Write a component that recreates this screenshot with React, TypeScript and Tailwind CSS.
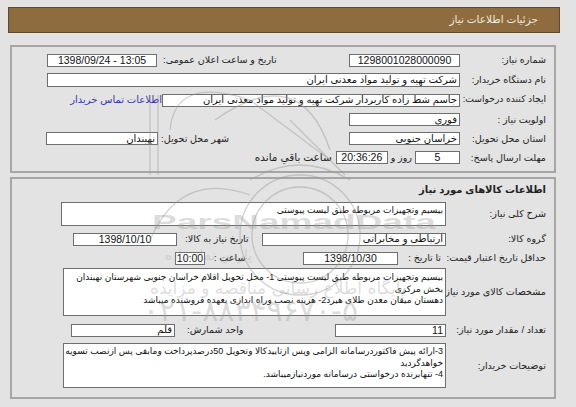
import React from "react";

function Field({
  className = "",
  children,
  center = false,
  ltr = false,
  num = false,
}: {
  className?: string;
  children?: React.ReactNode;
  center?: boolean;
  ltr?: boolean;
  num?: boolean;
}) {
  return (
    <div
      dir={ltr ? "ltr" : undefined}
      className={`h-[13px] shrink-0 bg-white border border-[#6e6e6e] flex items-center px-[2px] leading-none overflow-hidden whitespace-nowrap text-[#111] ${
        num ? "text-[10.5px]" : "text-[10px]"
      } ${center ? "justify-center" : ltr ? "justify-end" : "justify-start"} ${className}`}
    >
      {children}
    </div>
  );
}

function Label({ className = "", children }: { className?: string; children: React.ReactNode }) {
  return <div className={`shrink-0 whitespace-nowrap leading-none ${className}`}>{children}</div>;
}

const areaCls =
  "bg-white border border-[#6e6e6e] px-[2px] text-[9px] leading-[11.5px] whitespace-nowrap overflow-hidden text-[#111]";

export default function App() {
  return (
    <div
      dir="rtl"
      className="relative w-[576px] h-[407px] overflow-hidden bg-[#e3e3e3] text-[#222] text-[9.6px] font-['Liberation_Sans','DejaVu_Sans',sans-serif]"
    >
      <div className="pt-[7px] pl-[8px] pr-[16px]">
        <div className="h-[26px] bg-[#8e6c3f] border border-[#5d4a32] flex items-center pr-[21px] text-[10.5px] text-[#f2ebdd]">
          جزئیات اطلاعات نیاز
        </div>
      </div>

      {/* Panel 1 */}
      <div className="mt-[12px] ml-[10px] mr-[20px] h-[128px] border-2 border-[#a6a6a6] pt-[3px] pr-[8px]">
        <div className="flex justify-between items-center h-[20px]">
          <div className="flex items-center">
            <Label className="w-[86px]">شماره نیاز:</Label>
            <Field className="w-[111px]" center num>
              1298001028000090
            </Field>
          </div>
          <div className="flex items-center gap-[6px] ml-[35px]">
            <Label>تاریخ و ساعت اعلان عمومی:</Label>
            <Field className="w-[110px]" center ltr num>
              1398/09/24 - 13:05
            </Field>
          </div>
        </div>

        <div className="flex items-center h-[20px]">
          <Label className="w-[86px]">نام دستگاه خریدار:</Label>
          <Field className="w-[413px] h-[14px]">شرکت تهیه و تولید مواد معدنی ایران</Field>
        </div>

        <div className="flex justify-between items-center h-[20px]">
          <div className="flex items-center">
            <Label className="w-[86px] text-[9.2px]">ایجاد کننده درخواست:</Label>
            <Field className="w-[298px]">جاسم شط زاده کاربردار شرکت تهیه و تولید مواد معدنی ایران</Field>
          </div>
          <div className="ml-[63px] text-[10px] leading-none text-[#3838a8] whitespace-nowrap">اطلاعات تماس خریدار</div>
        </div>

        <div className="flex items-center h-[19px]">
          <Label className="w-[86px]">اولویت نیاز :</Label>
          <Field className="w-[111px]">فوری</Field>
        </div>

        <div className="flex justify-between items-center h-[19px]">
          <div className="flex items-center">
            <Label className="w-[86px]">استان محل تحویل:</Label>
            <Field className="w-[111px]">خراسان جنوبی</Field>
          </div>
          <div className="flex items-center gap-[3px] ml-[34px]">
            <Label>شهر محل تحویل:</Label>
            <Field className="w-[112px]">نهبندان</Field>
          </div>
        </div>

        <div className="flex items-center h-[19px]">
          <Label className="w-[86px]">مهلت ارسال پاسخ:</Label>
          <Field className="w-[45px]" center num>
            5
          </Field>
          <Label className="mx-[3px]">روز و</Label>
          <Field className="w-[52px]" center ltr num>
            20:36:26
          </Field>
          <Label className="mr-[4px] text-[10.5px]">ساعت باقي مانده</Label>
        </div>
      </div>

      {/* Panel 2 */}
      <div className="mt-[4px] ml-[10px] mr-[20px] h-[222px] border-2 border-[#a6a6a6] pr-[8px]">
        <div className="h-[22px] flex items-center text-[10px] font-bold leading-none">اطلاعات کالاهای مورد نیاز</div>

        <div className="mt-[1px] flex items-center">
          <Label className="w-[100px]">شرح کلی نیاز:</Label>
          <div className={`w-[385px] h-[24px] pt-[2px] ${areaCls}`}>بیسیم وتجهیزات مربوطه طبق لیست پیوستی</div>
        </div>

        <div className="mt-[4px] flex justify-between items-center h-[18px]">
          <div className="flex items-center">
            <Label className="w-[100px]">گروه کالا:</Label>
            <Field className="w-[184px]">ارتباطی و مخابراتی</Field>
          </div>
          <div className="flex items-center gap-[8px] ml-[61px]">
            <Label>تاریخ نیاز به کالا:</Label>
            <Field className="w-[104px]" center num>
              1398/10/10
            </Field>
          </div>
        </div>

        <div className="mt-[1px] flex justify-between items-center h-[18px]">
          <div className="flex items-center">
            <Label className="w-[91px]">حداقل تاریخ اعتبار قیمت:</Label>
            <Label className="w-[38px] mr-[14px]">تا تاریخ :</Label>
            <Field className="w-[95px] mr-[5px]" center num>
              1398/10/30
            </Field>
          </div>
          <div className="flex items-center gap-[9px] ml-[163px]">
            <Label>ساعت :</Label>
            <Field className="w-[30px] px-0" center num>
              10:00
            </Field>
          </div>
        </div>

        <div className="mt-[1px] flex items-center">
          <Label className="w-[100px]">مشخصات کالای مورد نیاز:</Label>
          <div className={`w-[383px] h-[48px] pt-[3px] ${areaCls}`}>
            بیسیم وتجهیزات مربوطه طبق لیست پیوستی 1- محل تحویل اقلام خراسان جنوبی شهرستان نهبندان
            <br />
            بخش مرکزی
            <br />
            دهستان میقان معدن طلای هیرد2- هزینه نصب وراه اندازی بعهده فروشنده میباشد
          </div>
        </div>

        <div className="mt-[5px] flex justify-between items-center h-[18px]">
          <div className="flex items-center">
            <Label className="w-[100px]">تعداد / مقدار مورد نیاز:</Label>
            <Field className="w-[111px]" num>
              11
            </Field>
          </div>
          <div className="flex items-center gap-[12px] ml-[59px]">
            <Label>واحد شمارش:</Label>
            <Field className="w-[104px]">قلم</Field>
          </div>
        </div>

        <div className="mt-[4px] flex items-center">
          <Label className="w-[100px]">توضیحات خریدار:</Label>
          <div className={`w-[383px] h-[45px] pt-[2px] ${areaCls}`}>
            3-ارائه پیش فاکتوردرسامانه الزامی وپس ازتاییدکالا وتحویل 50درصدپرداخت ومابقی پس ازنصب تسویه
            <br />
            خواهدگردید
            <br />
            4- تنهابرنده درخواستی درسامانه موردنیازمیباشد.
          </div>
        </div>
      </div>

      {/* Watermark overlay */}
      <div className="pointer-events-none absolute inset-0">
        <svg className="absolute left-0 top-0" width="576" height="407" viewBox="0 0 576 407" fill="none">
          <g stroke="#9a9a9a" strokeOpacity="0.45" strokeWidth="1.3">
            <path d="M150 95 L150 175" />
            <path d="M158 95 L158 175" />
            <path d="M170 130 Q175 75 250 100 L330 160" />
            <path d="M215 120 Q300 60 330 150" />
            <path d="M290 120 L345 175" />
            <path d="M250 180 Q300 150 350 180" />
            <circle cx="300" cy="235" r="60" />
            <circle cx="300" cy="235" r="48" />
            <path d="M150 240 Q180 170 250 195" />
          </g>
        </svg>
        <div
          dir="ltr"
          className="absolute left-[152px] top-[212px] text-[20px] font-bold leading-none text-[#9a9a9a]/35 origin-left scale-x-[1.85] font-['Liberation_Sans',sans-serif]"
        >
          ParsNamadData
        </div>
        <div className="absolute left-[165px] top-[248px] text-[14px] leading-none text-[#9a9a9a]/30 font-['DejaVu_Sans',sans-serif]">
          پارس نماد داده
        </div>
        <div className="absolute left-[150px] top-[280px] text-[17px] leading-none text-[#9a9a9a]/35 font-['DejaVu_Sans',sans-serif]">
          پایگاه اطلاع رسانی مناقصه و مزایده
        </div>
        <div
          dir="ltr"
          className="absolute left-[143px] top-[296px] text-[30px] leading-none text-[#9a9a9a]/35 font-['DejaVu_Sans',sans-serif]"
        >
          ۰۲۱-۸۸۳۴۹۶۷۰-۵
        </div>
      </div>
    </div>
  );
}
